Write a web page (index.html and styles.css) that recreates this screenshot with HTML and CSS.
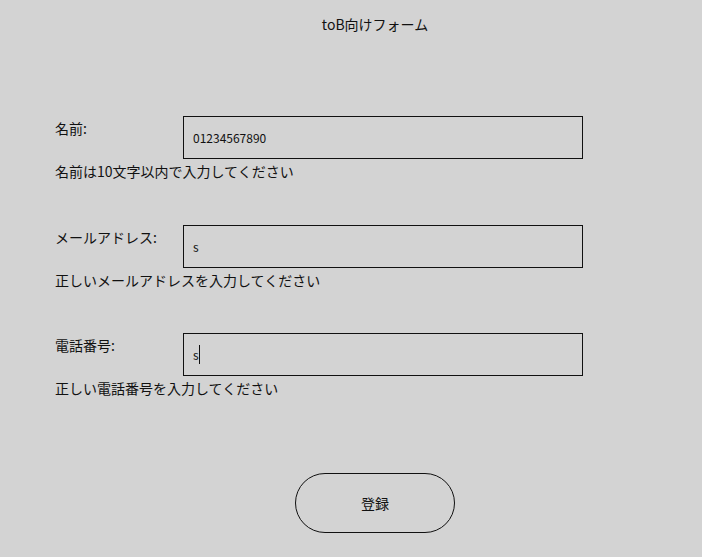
FILE: index.html
```html
<!DOCTYPE html>
<html lang="ja">
<head>
    <meta charset="UTF-8">
    <meta name="viewport" content="width=device-width, initial-scale=1.0">
    <title>toB向けフォーム</title>
    <link rel="stylesheet" href="styles.css">
</head>
<body>
    <div class="page">
        <h1 class="title">toB向けフォーム</h1>

        <form class="form" onsubmit="return false">
            <div class="field">
                <div class="row">
                    <label for="name">名前:</label>
                    <input type="text" id="name" value="01234567890">
                </div>
                <p class="error">名前は10文字以内で入力してください</p>
            </div>

            <div class="field">
                <div class="row">
                    <label for="mail">メールアドレス:</label>
                    <input type="text" id="mail" value="s">
                </div>
                <p class="error">正しいメールアドレスを入力してください</p>
            </div>

            <div class="field">
                <div class="row">
                    <label for="tel">電話番号:</label>
                    <span class="input-wrap">
                        <input type="text" id="tel" value="s">
                        <span class="caret"></span>
                    </span>
                </div>
                <p class="error">正しい電話番号を入力してください</p>
            </div>

            <div class="actions">
                <button type="submit" class="submit">登録</button>
            </div>
        </form>
    </div>
</body>
</html>
```

FILE: styles.css
```css
body {
    margin: 0;
    background: #d3d3d3;
    color: #111;
    font-family: "Noto Sans CJK JP", "Noto Sans", sans-serif;
    font-size: 14px;
}

.page {
    width: 640px;
    margin-left: 55px;
}

.title {
    margin: 0;
    padding-top: 15px;
    font-size: 14px;
    font-weight: normal;
    line-height: 18px;
    text-align: center;
}

.form {
    margin-top: 83px;
}

.field {
    margin-bottom: 45px;
}

.field:nth-child(2) {
    margin-bottom: 44px;
}

.row {
    display: flex;
    align-items: flex-start;
}

.row label {
    width: 128px;
    padding-top: 3px;
    line-height: 18px;
}

.input-wrap {
    position: relative;
    display: block;
}

.row input {
    display: block;
    box-sizing: border-box;
    width: 400px;
    height: 43px;
    margin: 0;
    padding: 0 9px;
    border: 1px solid #111;
    background: transparent;
    font-family: inherit;
    font-size: 12px;
    color: #111;
    outline: none;
}

/* text cursor shown in the focused phone field */
.caret {
    position: absolute;
    left: 16px;
    top: 12px;
    width: 1px;
    height: 19px;
    background: #111;
}

.error {
    margin: 3px 0 0;
    line-height: 18px;
}

.actions {
    display: flex;
    justify-content: center;
    padding-top: 31px;
}

.submit {
    width: 160px;
    height: 60px;
    border: 1px solid #111;
    border-radius: 30px;
    background: transparent;
    font-family: inherit;
    font-size: 14px;
    color: #111;
    cursor: pointer;
}
```
